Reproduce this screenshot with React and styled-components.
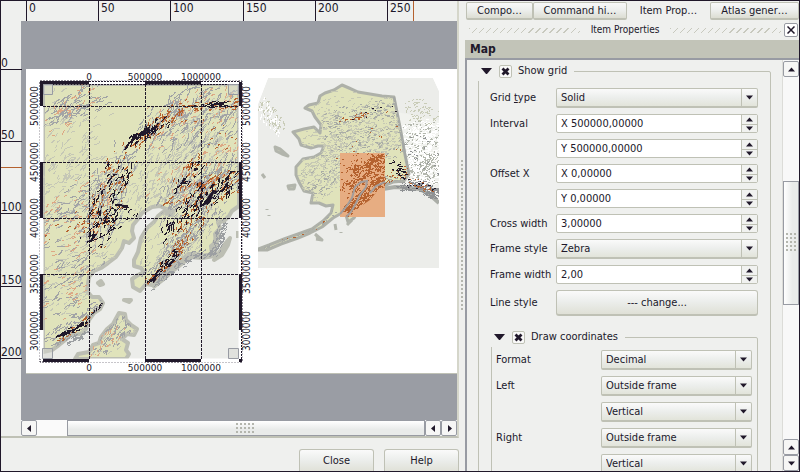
import React from "react";
import styled, { createGlobalStyle } from "styled-components";

const ink = "#20182a";
const paper = "#eff0ee";
const edge = "#bfc1b5";
const steel = "#989ba3";
const land = "#e0e3bb";
const rust = "#b5622f";

const Global = createGlobalStyle`
  * { box-sizing: border-box; }
  html, body, #root { height: 100%; }
  body {
    margin: 0;
    overflow: hidden;
    background: ${paper};
    color: ${ink};
    font: 11px/14px "DejaVu Sans Condensed", "Noto Sans", sans-serif;
  }
  button, input, select { font: inherit; color: inherit; margin: 0; }
`;

/* ---------- window ---------- */
const Window = styled.div`
  display: grid;
  grid-template-columns: minmax(0, 458fr) minmax(0, 340fr);
  height: 100vh;
  border: 1px solid ${ink};
  overflow: hidden;
`;
const Composer = styled.main`
  display: flex;
  flex-direction: column;
  min-width: 0;
  min-height: 0;
`;
const Workspace = styled.section`
  flex: 1;
  min-height: 0;
  display: grid;
  grid-template: 20px minmax(0, 1fr) 16px / 20px minmax(0, 1fr);
  border-right: 2px solid #d5d6ca;
  border-bottom: 2px solid ${edge};
`;

/* ---------- rulers ---------- */
const TopRuler = styled.div`
  grid-column: 1 / -1;
  display: grid;
  grid-template-columns: 72px 72px 73px 72px 72px 1fr;
  padding-left: 25px;
`;
const SideRuler = styled.div`
  display: grid;
  grid-template-rows: 49px 72px 72px 73px 72px;
  grid-row: 2 / 4;
`;
const TopTick = styled.div`
  position: relative;
  border-left: 1px solid ${ink};
  padding: 0 2px;
  font-size: 12px;
  line-height: 14px;
`;
const SideTick = styled.div`
  position: relative;
  border-bottom: 1px solid ${ink};
  display: flex;
  align-items: flex-end;
  font-size: 12px;
  line-height: 12px;
`;
const PointerX = styled.i`
  position: absolute;
  top: 0;
  bottom: 0;
  left: 25px;
  width: 1px;
  background: ${rust};
`;
const PointerY = styled.i`
  position: absolute;
  left: 0;
  right: 0;
  top: 25px;
  height: 1px;
  background: ${rust};
`;

/* ---------- canvas ---------- */
const Canvas = styled.div`
  background: #9a9da4;
  padding: 48px 0 0 5px;
  overflow: hidden;
`;
const Page = styled.div`
  display: flex;
  background: #fff;
  border-bottom: 1px solid ${edge};
  overflow: hidden;
`;
const MapDrawing = styled.svg`
  display: block;
  flex: none;
`;

/* ---------- scroll bars ---------- */
const HBar = styled.div`
  display: flex;
  background: #fafafa;
  height: 16px;
`;
const VBar = styled.div`
  display: flex;
  flex-direction: column;
  width: 17px;
  flex: none;
  background: #f8f8f8;
  border-left: 1px solid #dcdcd8;
  padding-top: 1px;
`;
const ArrowButton = styled.button`
  display: grid;
  place-items: center;
  flex: none;
  width: 16px;
  height: 16px;
  padding: 0;
  background: #f6f6f5;
  border: 1px solid ${steel};
  border-radius: 2px;
`;
const Thumb = styled.div`
  display: grid;
  place-items: center;
  border: 1px solid ${steel};
  background: ${(p) =>
    p.$vertical
      ? "linear-gradient(90deg, #fff, #e9ebea 60%)"
      : "linear-gradient(#fff, #e9ebea 60%)"};
  ${(p) => (p.$vertical ? "height: 124px; width: 16px;" : "flex: 1;")}
`;
const Gap = styled.div`
  flex: ${(p) => p.$flex || "none"};
  width: ${(p) => (p.$w ? p.$w + "px" : "auto")};
  height: ${(p) => (p.$h ? p.$h + "px" : "auto")};
`;
const Grip = styled.div`
  width: ${(p) => p.$w}px;
  height: ${(p) => p.$h}px;
  background: radial-gradient(circle at 1px 1px, #b4b6ae 1px, transparent 1px) 0 0 / 4px 4px;
`;

/* ---------- footer ---------- */
const Footer = styled.footer`
  display: flex;
  justify-content: flex-end;
  gap: 10px;
  height: 33px;
  padding-top: 11px;
  overflow: hidden;
`;
const PushButton = styled.button`
  height: ${(p) => p.$h || 25}px;
  width: ${(p) => p.$w || "75px"};
  padding: 0;
  border: 1px solid ${edge};
  border-radius: 3px;
  border-bottom-width: 2px;
  background: linear-gradient(#fafafa, #eceeec 45%, #dfe0d6);
`;

/* ---------- side panel ---------- */
const SidePanel = styled.aside`
  display: grid;
  grid-template-columns: 6px minmax(0, 1fr);
  min-width: 0;
  min-height: 0;
`;
const Splitter = styled.div`
  display: grid;
  place-items: center start;
  padding-left: 2px;
`;
const Dock = styled.div`
  display: flex;
  flex-direction: column;
  min-width: 0;
  min-height: 0;
`;
const Tabs = styled.div`
  display: grid;
  grid-template-columns: 67fr 94fr 83fr 89fr;
  height: 19px;
  flex: none;
  padding-left: 1px;
`;
const Tab = styled.button`
  padding: 0 2px;
  margin: ${(p) => (p.$active ? "0" : "1px 0 0")};
  border: 1px solid ${(p) => (p.$active ? "transparent" : edge)};
  border-bottom-width: ${(p) => (p.$active ? 0 : 2)}px;
  border-radius: 2px;
  background: ${(p) => (p.$active ? "none" : "linear-gradient(#f8f8f8, #eceeec 50%, #dcddd2)")};
  white-space: nowrap;
`;
const DockTitle = styled.header`
  display: flex;
  align-items: center;
  gap: 11px;
  height: 20px;
  flex: none;
  padding: 0 1px 0 4px;
  font-size: 10px;
`;
const Hatch = styled.i`
  flex: 1;
  height: 5px;
  background: repeating-linear-gradient(135deg, #c8c9be 0 1px, transparent 1px 5px);
`;
const CloseButton = styled.button`
  display: grid;
  place-items: center;
  width: 14px;
  height: 14px;
  margin-left: -8px;
  padding: 0;
  border: 1px solid ${steel};
  border-radius: 2px;
  background: #fff;
`;
const SectionTitle = styled.h2`
  flex: none;
  margin: 0;
  height: 18px;
  padding-left: 5px;
  background: #c2c4b8;
  font-size: 12px;
  line-height: 18px;
`;
const ScrollArea = styled.div`
  flex: 1;
  min-height: 0;
  display: flex;
  border: 2px solid ${steel};
  border-width: 2px 0 0 2px;
  overflow: hidden;
`;
const Content = styled.form`
  flex: 1;
  min-width: 0;
  padding: 1px 11px 0;
  overflow: hidden;
`;
const Group = styled.fieldset`
  min-width: 0;
  margin: ${(p) => (p.$nested ? "11px 0 0" : "0")};
  padding: 0 ${(p) => (p.$nested ? 5 : 12)}px 12px 0;
  border: 1px solid ${edge};
  border-radius: 2px;
`;
const GroupTitle = styled.legend`
  display: flex;
  align-items: center;
  gap: 6px;
  height: 20px;
  margin-left: -1px;
  padding: 0 7px 0 3px;
  background: ${paper};
`;
const Twisty = styled.button`
  display: grid;
  place-items: center;
  width: 12px;
  height: 12px;
  padding: 0;
  border: 0;
  background: none;
`;
const CheckLabel = styled.label`
  position: relative;
  display: flex;
  align-items: center;
  gap: 6px;
`;
const CheckBox = styled.input`
  appearance: none;
  width: 13px;
  height: 13px;
  border: 1px solid ${edge};
  border-radius: 2px;
  background: #f8f8f7;
  & + svg { display: none; }
  &:checked + svg { display: block; }
`;
const CheckMark = styled.svg`
  position: absolute;
  left: 2px;
  top: 3px;
  pointer-events: none;
`;
const Fields = styled.div`
  display: grid;
  grid-template-columns: ${(p) => p.$label}px minmax(0, 1fr);
  align-items: center;
  row-gap: 6px;
  padding: ${(p) => (p.$nested ? "3px 0 0 4px" : "7px 0 0 11px")};
`;
const NestedRow = styled.div`
  padding-left: 12px;
`;
const FieldLabel = styled.label`
  white-space: nowrap;
`;
const SelectBox = styled.div`
  position: relative;
  height: 20px;
`;
const Select = styled.select`
  appearance: none;
  width: 100%;
  height: 20px;
  padding: 0 20px 0 4px;
  border: 1px solid ${edge};
  border-bottom-width: 2px;
  border-radius: 2px;
  background: linear-gradient(#fafafa, #eceeec 50%, #e2e4da);
`;
const SelectArrow = styled.span`
  position: absolute;
  inset: 1px 1px 2px auto;
  width: 16px;
  display: grid;
  place-items: center;
  border-left: 1px solid ${edge};
  pointer-events: none;
`;
const SpinBox = styled.div`
  display: grid;
  grid-template-columns: minmax(0, 1fr) 16px;
  height: 19px;
  border: 1px solid ${edge};
  border-radius: 2px;
  background: #fff;
`;
const SpinInput = styled.input`
  width: 100%;
  height: 17px;
  border: 0;
  padding: 0 4px;
  background: transparent;
`;
const SpinButtons = styled.div`
  display: grid;
  grid-template-rows: 1fr 1fr;
  border-left: 1px solid ${edge};
  background: #f1f2f0;
`;
const SpinButton = styled.button`
  display: grid;
  place-items: center;
  min-height: 0;
  padding: 0;
  border: 0;
  background: none;
  & + & { border-top: 1px solid ${edge}; }
`;

/* ---------- small glyphs ---------- */
const arrowPaths = {
  down: "M0 1H7L3.5 5Z",
  up: "M0 5H7L3.5 1Z",
  left: "M5 0V7L1 3.5Z",
  right: "M2 0V7L6 3.5Z",
};
const Arrow = ({ dir }) => {
  const flat = dir === "up" || dir === "down";
  return (
    <svg width="7" height={flat ? 5 : 7} viewBox={flat ? "0 0.5 7 5" : "0 0 7 7"} aria-hidden="true">
      <path d={arrowPaths[dir]} fill={ink} />
    </svg>
  );
};

/* ---------- terrain ---------- */
const makeRandom = (seed) => () => {
  seed = (seed + 0x6d2b79f5) | 0;
  let t = Math.imul(seed ^ (seed >>> 15), 1 | seed);
  t = (t + Math.imul(t ^ (t >>> 7), 61 | t)) ^ t;
  return ((t ^ (t >>> 14)) >>> 0) / 4294967296;
};

// Short slope strokes scattered round a ridge line: [x1, y1, x2, y2, spread, count, angle, length]
function hachures(bands, seed) {
  const rnd = makeRandom(seed);
  let d = "";
  bands.forEach(([x1, y1, x2, y2, spread, count, angle, length]) => {
    for (let i = 0; i < count; i++) {
      const t = rnd();
      const off = Math.sqrt(rnd()) * spread;
      const turn = rnd() * 6.28;
      const x = x1 + (x2 - x1) * t + Math.cos(turn) * off;
      const y = y1 + (y2 - y1) * t + Math.sin(turn) * off;
      const a = ((angle + (rnd() - 0.5) * 50) * Math.PI) / 180;
      const b = a + (rnd() - 0.5) * 1.6;
      const l = length * (0.25 + rnd() * 0.45);
      d += `M${x.toFixed(1)} ${y.toFixed(1)}l${(Math.cos(a) * l).toFixed(1)} ${(-Math.sin(a) * l).toFixed(1)}l${(Math.cos(b) * l * 0.7).toFixed(1)} ${(-Math.sin(b) * l * 0.7).toFixed(1)}`;
    }
  });
  return d;
}

const Relief = ({ layers }) =>
  layers.map(([color, width, seed, bands]) => (
    <path key={seed} d={hachures(bands, seed)} stroke={color} strokeWidth={width} fill="none" shapeRendering="crispEdges" />
  ));

const gulfLand =
  "M43 84H239V206L232 211L229 216L224 221L218 222L220 228L215 234L216 242L211 246L212 254L204 256L196 254L188 254L181 261L175 262L169 269L159 276L152 285L146 284L140 291L133 287L132 279L138 275L144 272L141 268L134 266L134 260L138 252L141 238L147 228L154 222L158 216L163 212L172 215L174 211L166 209L160 206L152 207L142 213L138 219L133 225L132 231L134 238L129 243L124 241L122 248L116 257L108 263L101 268L94 271L89 277L87 291L92 297L99 297L103 303L100 309L94 313L89 320L86 329L81 334L71 335L64 341L59 345L52 350L43 352Z";
const kodiak =
  "M119 313L125 314L126 320L131 325L137 329L134 335L127 334L122 339L128 343L126 350L129 354L126 359H75L78 354L89 352L93 345L99 343L101 337L107 329L113 324Z";

const detailLayers = [
  ["#c5c7b6", 1, 11, [
    [48, 160, 80, 100, 34, 90, 42, 8], [45, 200, 105, 170, 32, 150, 38, 7],
    [160, 150, 235, 110, 34, 220, 48, 7], [50, 300, 95, 240, 30, 130, 30, 7],
    [115, 205, 200, 160, 30, 200, 58, 7], [150, 265, 170, 220, 18, 40, 50, 6], [85, 345, 125, 335, 16, 60, 45, 5],
    [150, 280, 215, 215, 14, 130, 50, 6], [160, 200, 238, 160, 24, 150, 50, 7],
  ]],
  ["#a2a4a6", 1, 21, [
    [46, 125, 90, 92, 12, 50, 42, 9], [50, 122, 105, 100, 8, 30, 28, 7],
    [140, 140, 200, 92, 16, 100, 50, 8], [175, 150, 238, 105, 26, 120, 50, 8],
    [95, 240, 120, 160, 18, 150, 64, 8], [48, 240, 100, 190, 26, 90, 35, 8],
    [50, 310, 90, 255, 22, 60, 30, 8], [150, 280, 215, 205, 12, 170, 55, 6],
    [160, 210, 238, 170, 20, 200, 50, 8], [46, 345, 100, 305, 8, 90, 28, 6],
    [95, 350, 128, 325, 12, 60, 60, 6],
  ]],
  ["#dda784", 1, 31, [
    [50, 128, 90, 92, 14, 40, 42, 5], [50, 235, 100, 190, 28, 70, 30, 5],
    [50, 310, 90, 250, 24, 45, 25, 5], [150, 130, 235, 100, 22, 70, 50, 5],
    [160, 200, 235, 155, 24, 60, 55, 5], [95, 350, 125, 330, 12, 25, 60, 4],
  ]],
  [rust, 1, 41, [
    [130, 148, 178, 110, 8, 80, 55, 4], [178, 108, 238, 104, 6, 40, 10, 4],
    [92, 242, 122, 160, 16, 90, 62, 4], [150, 282, 185, 245, 6, 50, 40, 4],
    [175, 205, 235, 180, 16, 90, 52, 5], [178, 180, 202, 160, 8, 30, 55, 4],
    [190, 110, 225, 150, 18, 20, 45, 3], [55, 344, 100, 310, 4, 34, 25, 3],
    [50, 245, 90, 215, 14, 18, 20, 3], [175, 245, 200, 215, 12, 50, 65, 4],
  ]],
  [ink, 1, 51, [
    [132, 145, 165, 123, 7, 55, 58, 6], [193, 108, 230, 102, 3, 18, 5, 5],
    [94, 240, 118, 165, 15, 70, 62, 6], [88, 240, 130, 212, 9, 30, 38, 6],
    [150, 284, 178, 251, 4, 45, 45, 5], [168, 238, 200, 195, 12, 46, 62, 6],
    [175, 190, 202, 166, 6, 22, 48, 6], [200, 202, 237, 182, 12, 60, 55, 6],
    [58, 337, 86, 324, 3, 28, 25, 5], [89, 320, 103, 304, 2, 18, 50, 4],
  ]],
];
const ridges =
  "M125 150L129 143L133 141M133 140L137 133M144 129L148 130L147 134M151 131L157 126M202 206L207 200L210 197M115 205L128 206M222 192L228 182M90 242L96 234M103 223L110 221M150 282L156 276M168 267L174 260M56 337L66 333M76 328L84 324M211 105L224 103";
const peaks = "M138 137L144 135L150 128L146 127Z M203 205L209 204L214 193L219 191L213 190L209 195Z";

const gridX = [[89, "0"], [145, "500000"], [201, "1000000"]];
const gridY = [[106, "5000000"], [162, "4500000"], [218, "4000000"], [274, "3500000"], [331, "3000000"]];

const DetailMap = () => (
  <MapDrawing width="232" height="304" viewBox="26 69 232 304" role="img" aria-label="Detail map with grid">
    <defs>
      <clipPath id="detailFrame"><path d="M43 84H239V359H43Z" /></clipPath>
      <clipPath id="detailLand"><path d={gulfLand} /><path d={kodiak} /></clipPath>
    </defs>
    <g clipPath="url(#detailFrame)">
      <path d="M43 84H239V359H43Z" fill="#ecedea" />
      <g fill={land} stroke="#bcbeb3" strokeWidth="4" strokeLinejoin="round">
        <path d={gulfLand} />
        <path d={kodiak} />
        <path d="M230 238L224 245L217 256L214 260L222 255L228 245Z" />
        <path d="M98 283L101 281L103 284L100 285Z M124 300L131 300L129 302Z M220 222L221 224M238 231V238" />
      </g>
      <path d="M152 287L161 280L170 272L180 264L190 256L202 257L214 255L215 244L219 232" fill="none" stroke="#bcbeb3" strokeWidth="6" strokeLinejoin="round" />
      <Relief layers={[["#9c9fa2", 1, 15, [[150, 288, 190, 258, 4, 60, 45, 4], [190, 256, 214, 254, 4, 40, 45, 4], [216, 250, 222, 225, 5, 60, 60, 4], [60, 346, 88, 332, 4, 40, 30, 4]]]]} />
      <g clipPath="url(#detailLand)">
        <Relief layers={detailLayers} />
        <path d={ridges} fill="none" stroke={ink} strokeWidth="2" shapeRendering="crispEdges" />
        <path d={peaks} fill={ink} />
      </g>
    </g>
    <path d="M40 81H242V362H40Z" fill="none" stroke={ink} strokeDasharray="2 1" />
    <path d="M43.5 84.5H238.5" stroke={ink} strokeDasharray="2 1" />
    <path d="M41.5 106V162M41.5 218V274M41.5 330V359M240.5 106V162M240.5 218V274M240.5 330V359M89 82.5H145M201 82.5H239M89 360.5H145M201 360.5H239" stroke="#fff" strokeWidth="4" />
    <path d="M41.5 82V106M41.5 162V218M41.5 274V330M240.5 82V106M240.5 162V218M240.5 274V330M40 82.5H89M145 82.5H201M43 360.5H89M145 360.5H201M239 360.5H242" stroke={ink} strokeWidth="3" />
    <path d="M89 81.5H145M201 81.5H239M89 84.5H145M201 84.5H239M241.5 106V162M241.5 218V274M241.5 330V359" stroke={ink} strokeDasharray="2 1" />
    <g stroke={ink} strokeWidth="1" strokeDasharray="3 1">
      {gridX.map(([x]) => <path key={x} d={`M${x + 0.5} 84V359`} />)}
      {gridY.slice(0, 4).map(([y]) => <path key={y} d={`M43 ${y + 0.5}H239`} />)}
    </g>
    <g fill="#d3d5cf" fillOpacity="0.5" stroke={steel}>
      <path d="M43.5 84.5H52.5V94.5H43.5ZM228.5 84.5H238.5V94.5H228.5ZM42.5 348.5H52.5V358.5H42.5ZM228.5 348.5H238.5V358.5H228.5Z" />
    </g>
    <g fill={ink} fontFamily='"DejaVu Sans", sans-serif' fontSize="9" textAnchor="middle">
      {gridX.map(([x, label]) => (
        <React.Fragment key={label}>
          <text x={x} y="80">{label}</text>
          <text x={x} y="371">{label}</text>
        </React.Fragment>
      ))}
    </g>
    <g fill={ink} fontFamily='"DejaVu Sans Condensed", sans-serif' fontSize="10" textAnchor="middle">
      {gridY.map(([y, label]) => (
        <React.Fragment key={label}>
          <text transform={`translate(38 ${y}) rotate(-90)`}>{label}</text>
          <text transform={`translate(250 ${y}) rotate(-90)`}>{label}</text>
        </React.Fragment>
      ))}
    </g>
  </MapDrawing>
);

const alaska =
  "M342 85L349 88L358 92L370 94L382 96L394 97L397 112L401 132L405 155L409 174L404 181L393 182L388 184L383 188L376 192L370 198L364 203L359 209L354 218L348 222L346 215L340 214L333 218L322 227L310 233L298 238L281 244L267 250L258 250V249L269 245L284 239L298 234L312 229L323 221L331 213L333 205L326 206L319 203L311 203L313 193L304 191L299 182L296 175L296 167L303 159L314 157L321 153L324 146L318 146L311 148L301 145L299 139L293 132L304 129L314 127L320 133L321 125L315 117L312 111L305 108L309 105L318 103L320 96L325 93L334 90Z";
const yukon = "M397 112L439 120V203L430 191L418 187L404 187L409 173Z";

const overviewLayers = [
  ["#c6c8b4", 1, 71, [[310, 170, 340, 105, 24, 330, 15, 3], [350, 160, 390, 115, 28, 460, 15, 3], [310, 190, 345, 150, 20, 220, 30, 3]]],
  ["#a9aca6", 1, 81, [[325, 120, 395, 108, 10, 110, 5, 3], [330, 145, 395, 140, 18, 120, 15, 3], [305, 190, 340, 170, 16, 60, 35, 3], [258, 250, 335, 213, 6, 120, 25, 3], [380, 187, 409, 175, 8, 80, 10, 3]]],
  [rust, 1, 91, [[340, 122, 372, 113, 3, 26, 5, 2], [378, 184, 405, 171, 6, 40, 5, 2], [345, 170, 395, 130, 25, 20, 5, 2], [270, 244, 330, 222, 3, 12, 5, 2]]],
  [ink, 1, 101, [[392, 163, 407, 177, 6, 30, 0, 3], [350, 116, 395, 108, 6, 8, 0, 2]]],
];
const yukonLayers = [
  ["#fff", 1, 111, [[412, 145, 436, 140, 22, 400, 10, 4], [412, 170, 437, 170, 16, 340, 10, 4]]],
  ["#b4b8ae", 1, 121, [[410, 145, 436, 145, 24, 190, 30, 2], [412, 170, 437, 170, 15, 150, 20, 2]]],
  ["#8f9294", 1, 131, [[398, 186, 418, 186, 5, 60, 0, 4], [418, 186, 438, 196, 6, 110, 0, 4], [405, 150, 437, 160, 20, 40, 0, 2]]],
  [ink, 1, 141, [[405, 183, 437, 189, 5, 20, 0, 2]]],
  [rust, 1, 151, [[405, 181, 437, 190, 5, 22, 0, 2]]],
];
const extentLayers = [
  [rust, 1, 161, [[348, 190, 380, 162, 9, 160, 38, 3], [350, 172, 381, 157, 4, 80, 30, 3], [345, 213, 358, 200, 6, 100, 40, 3], [362, 200, 384, 178, 7, 150, 35, 3], [345, 180, 380, 160, 20, 80, 10, 2]]],
];
const shoals = [
  ["#c9ccb8", 1, 171, [[262, 105, 280, 132, 8, 60, 70, 3], [405, 108, 437, 115, 12, 60, 30, 3]]],
  ["#fff", 1, 181, [[260, 105, 280, 135, 8, 50, 70, 3]]],
];

const OverviewMap = () => (
  <MapDrawing width="182" height="304" viewBox="258 69 182 304" role="img" aria-label="Overview map">
    <defs>
      <clipPath id="overviewLand"><path d={alaska} /></clipPath>
      <clipPath id="overviewFrame"><path d="M268 78H433L439 91V268H258V104Z" /></clipPath>
      <clipPath id="extent"><path d="M340 153H385V217H340Z" /></clipPath>
    </defs>
    <g clipPath="url(#overviewFrame)">
      <path d="M268 78H433L439 91V268H258V104Z" fill="#ecedea" />
      <path d={yukon} fill="#f1f2ee" />
      <path d="M383 189L395 187L408 188L420 189L430 195L439 203" fill="none" stroke="#aaada7" strokeWidth="4" />
      <Relief layers={yukonLayers} />
      <Relief layers={shoals} />
      <g strokeLinejoin="round">
        <path d={alaska} fill={land} stroke="#aeb1a9" strokeWidth="3" />
        <path d="M275 147L280 149L288 156L282 154L276 151ZM262 174L265 178M288 186L295 185L294 189L289 189ZM267 209V210M269 215V216M335 224L336 230M341 232V233M347 225L352 220M315 234L322 240L316 239" fill="#c9ccb8" stroke="#b2b5ac" strokeWidth="3" />
        <path d="M394 97L409 174" stroke="#a4a7a5" strokeWidth="2" />
      </g>
      <g clipPath="url(#overviewLand)"><Relief layers={overviewLayers} /></g>
      <path d="M340 153H385V217H340Z" fill="#e7ad82" />
      <g clipPath="url(#extent)">
        <Relief layers={extentLayers} />
        <path d="M363 217L361 206L370 200L378 190L385 187V217Z" fill="#e7ad82" />
        <path d="M340 214L346 207L352 198L355 187L361 182L367 181L366 187L360 195L356 203L351 212L346 217M385 182L376 186L370 193" fill="none" stroke="#a39d9b" strokeWidth="2" />
      </g>
    </g>
  </MapDrawing>
);

/* ---------- form parts ---------- */
const Combo = ({ id, label, value }) => (
  <>
    {label ? <FieldLabel htmlFor={id}>{label}</FieldLabel> : <span />}
    <SelectBox>
      <Select id={id} defaultValue={value} aria-label={label ? undefined : id}>
        <option>{value}</option>
      </Select>
      <SelectArrow><Arrow dir="down" /></SelectArrow>
    </SelectBox>
  </>
);
const Spin = ({ id, label, value }) => (
  <>
    {label ? <FieldLabel htmlFor={id}>{label}</FieldLabel> : <span />}
    <SpinBox>
      <SpinInput id={id} defaultValue={value} aria-label={label ? undefined : id} />
      <SpinButtons>
        <SpinButton type="button" aria-label="Increase"><Arrow dir="up" /></SpinButton>
        <SpinButton type="button" aria-label="Decrease"><Arrow dir="down" /></SpinButton>
      </SpinButtons>
    </SpinBox>
  </>
);
const CheckTitle = ({ children }) => (
  <GroupTitle>
    <Twisty type="button" aria-label="Collapse">
      <svg width="12" height="7" viewBox="0 0 12 7"><path d="M0 0H11L6 6H5Z" fill={ink} /></svg>
    </Twisty>
    <CheckLabel>
      <CheckBox type="checkbox" defaultChecked />
      <CheckMark width="9" height="9" viewBox="0 0 9 9">
        <path d="M1.5 1.5L7.5 7.5M7.5 1.5L1.5 7.5" stroke={ink} strokeWidth="2.8" />
      </CheckMark>
      {children}
    </CheckLabel>
  </GroupTitle>
);

export default function App() {
  return (
    <>
      <Global />
      <Window>
        <Composer>
          <Workspace>
            <TopRuler>
              {[0, 50, 100, 150, 200, 250].map((n) => (
                <TopTick key={n}>{n}{n === 250 && <PointerX />}</TopTick>
              ))}
            </TopRuler>
            <SideRuler>
              {[0, 50, 100, 150, 200].map((n) => (
                <SideTick key={n}>{n}{n === 100 && <PointerY />}</SideTick>
              ))}
            </SideRuler>
            <Canvas>
              <Page>
                <DetailMap />
                <OverviewMap />
              </Page>
            </Canvas>
            <HBar>
              <ArrowButton aria-label="Scroll left"><Arrow dir="left" /></ArrowButton>
              <Gap $w={30} />
              <Thumb><Grip $w={20} $h={11} /></Thumb>
              <ArrowButton aria-label="Scroll left"><Arrow dir="left" /></ArrowButton>
              <ArrowButton aria-label="Scroll right"><Arrow dir="right" /></ArrowButton>
            </HBar>
          </Workspace>
          <Footer>
            <PushButton type="button">Close</PushButton>
            <PushButton type="button">Help</PushButton>
          </Footer>
        </Composer>

        <SidePanel>
          <Splitter><Grip $w={3} $h={152} /></Splitter>
          <Dock>
            <Tabs role="tablist">
              <Tab role="tab">Compo…</Tab>
              <Tab role="tab">Command hi…</Tab>
              <Tab role="tab" aria-selected="true" $active>Item Prop…</Tab>
              <Tab role="tab">Atlas gener…</Tab>
            </Tabs>
            <DockTitle>
              <Hatch />
              Item Properties
              <Hatch />
              <CloseButton aria-label="Close panel">
                <svg width="8" height="8" viewBox="0 0 8 8"><path d="M0.5 0.5L7.5 7.5M7.5 0.5L0.5 7.5" stroke={ink} strokeWidth="1.5" /></svg>
              </CloseButton>
            </DockTitle>
            <SectionTitle>Map</SectionTitle>
            <ScrollArea>
              <Content>
                <Group>
                  <CheckTitle>Show grid</CheckTitle>
                  <Fields $label={66}>
                    <Combo id="grid-type" label={<>Grid <u>t</u>ype</>} value="Solid" />
                    <Spin id="interval-x" label="Interval" value="X 500000,00000" />
                    <Spin id="interval-y" value="Y 500000,00000" />
                    <Spin id="offset-x" label="Offset X" value="X 0,00000" />
                    <Spin id="offset-y" value="Y 0,00000" />
                    <Spin id="cross-width" label="Cross width" value="3,00000" />
                    <Combo id="frame-style" label="Frame style" value="Zebra" />
                    <Spin id="frame-width" label="Frame width" value="2,00" />
                    <FieldLabel htmlFor="line-style">Line style</FieldLabel>
                    <PushButton id="line-style" type="button" $h={26} $w="100%">--- change...</PushButton>
                  </Fields>
                  <NestedRow>
                    <Group $nested>
                      <CheckTitle>Draw coordinates</CheckTitle>
                      <Fields $label={105} $nested>
                        <Combo id="format" label="Format" value="Decimal" />
                        <Combo id="left" label="Left" value="Outside frame" />
                        <Combo id="left-direction" value="Vertical" />
                        <Combo id="right" label="Right" value="Outside frame" />
                        <Combo id="right-direction" value="Vertical" />
                      </Fields>
                    </Group>
                  </NestedRow>
                </Group>
              </Content>
              <VBar>
                <ArrowButton aria-label="Scroll up"><Arrow dir="up" /></ArrowButton>
                <Gap $h={104} />
                <Thumb $vertical><Grip $w={11} $h={20} /></Thumb>
                <Gap $flex="1" />
                <ArrowButton aria-label="Scroll up"><Arrow dir="up" /></ArrowButton>
                <ArrowButton aria-label="Scroll down"><Arrow dir="down" /></ArrowButton>
              </VBar>
            </ScrollArea>
          </Dock>
        </SidePanel>
      </Window>
    </>
  );
}
